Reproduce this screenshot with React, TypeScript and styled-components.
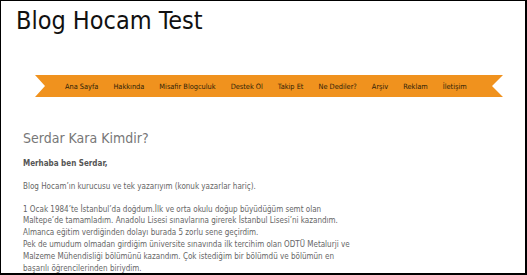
import React from 'react'
import styled, { createGlobalStyle } from 'styled-components'

const GlobalStyle = createGlobalStyle`
  html, body {
    margin: 0;
    padding: 0;
    background: #ffffff;
  }
`

const Frame = styled.div`
  width: 527px;
  height: 275px;
  box-sizing: border-box;
  border-top: 1px solid #000;
  border-left: 1px solid #000;
  border-right: 2px solid #000;
  border-bottom: 2px solid #000;
  overflow: hidden;
  font-family: 'DejaVu Sans Condensed', 'Liberation Sans', sans-serif;
`

const Title = styled.h1`
  margin: 0;
  padding: 4px 0 0 15px;
  font-family: 'DejaVu Sans Condensed', 'Liberation Sans', sans-serif;
  font-weight: normal;
  font-size: 25px;
  line-height: 31px;
  color: #111;
`

const Ribbon = styled.nav`
  margin: 39px 0 0 34px;
  width: 468px;
  height: 22px;
  background: #f0921e;
  clip-path: polygon(0 0, 100% 0, calc(100% - 11px) 50%, 100% 100%, 0 100%, 10px 50%);
  display: flex;
  align-items: center;
  gap: 15px;
  padding-left: 30px;
  box-sizing: border-box;
`

const MenuItem = styled.span`
  font-size: 7.35px;
  color: #2e1e08;
  white-space: nowrap;
`

const Content = styled.main`
  padding: 0 0 0 22px;
  color: #666;
`

const Heading = styled.h2`
  margin: 32px 0 0;
  font-weight: normal;
  font-size: 14px;
  line-height: 18px;
  color: #777;
`

const Paragraph = styled.p<{ $bold?: boolean }>`
  margin: 11px 0 0;
  font-size: 8px;
  line-height: 11.8px;
  font-weight: ${(p) => (p.$bold ? 'bold' : 'normal')};
  color: ${(p) => (p.$bold ? '#555' : '#666')};
  white-space: nowrap;
`

const menu = [
  'Ana Sayfa',
  'Hakkında',
  'Misafir Blogculuk',
  'Destek Ol',
  'Takip Et',
  'Ne Dediler?',
  'Arşiv',
  'Reklam',
  'İletişim',
]

const bio = [
  '1 Ocak 1984’te İstanbul’da doğdum.İlk ve orta okulu doğup büyüdüğüm semt olan',
  'Maltepe’de tamamladım. Anadolu Lisesi sınavlarına girerek İstanbul Lisesi’ni kazandım.',
  'Almanca eğitim verdiğinden dolayı burada 5 zorlu sene geçirdim.',
  'Pek de umudum olmadan girdiğim üniversite sınavında ilk tercihim olan ODTÜ Metalurji ve',
  'Malzeme Mühendisliği bölümünü kazandım. Çok istediğim bir bölümdü ve bölümün en',
  'başarılı öğrencilerinden biriydim.',
]

const App: React.FC = () => {
  return (
    <>
      <GlobalStyle />
      <Frame>
        <Title>Blog Hocam Test</Title>
        <Ribbon>
          {menu.map((item) => (
            <MenuItem key={item}>{item}</MenuItem>
          ))}
        </Ribbon>
        <Content>
          <Heading>Serdar Kara Kimdir?</Heading>
          <Paragraph $bold>Merhaba ben Serdar,</Paragraph>
          <Paragraph>Blog Hocam’ın kurucusu ve tek yazarıyım (konuk yazarlar hariç).</Paragraph>
          <Paragraph>
            {bio.map((line, i) => (
              <React.Fragment key={i}>
                {line}
                {i < bio.length - 1 && <br />}
              </React.Fragment>
            ))}
          </Paragraph>
        </Content>
      </Frame>
    </>
  )
}

export default App
